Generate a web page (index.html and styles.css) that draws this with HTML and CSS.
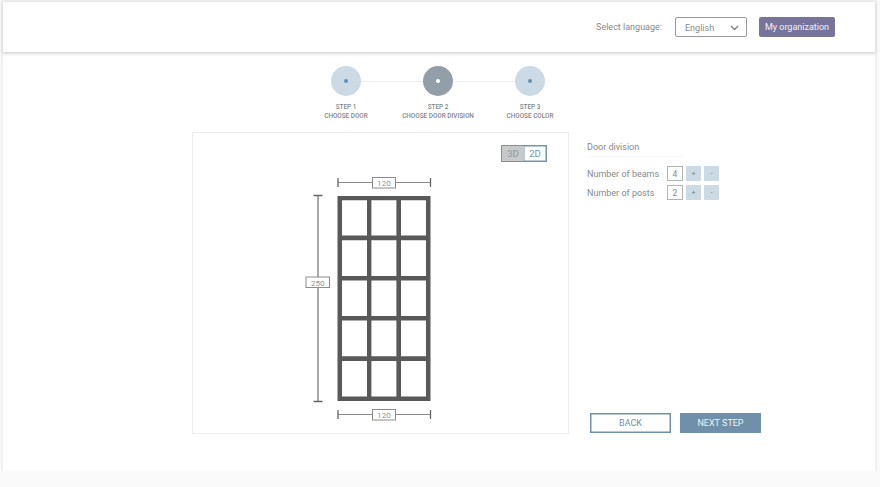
FILE: index.html
```html
<!DOCTYPE html>
<html lang="en">
<head>
<meta charset="utf-8">
<title>Door division</title>
<link rel="stylesheet" href="styles.css">
</head>
<body>
<div class="app">
  <header class="header">
    <span class="lang-label">Select language:</span>
    <button class="select"><span>English</span><svg width="9" height="6" viewBox="0 0 9 6"><path d="M1 1l3.5 3.5L8 1" fill="none" stroke="#7c7f82" stroke-width="1.3"/></svg></button>
    <button class="org">My organization</button>
  </header>
  <ol class="steps">
    <li class="step"><span class="dot"></span><span class="caption">STEP 1<br>CHOOSE DOOR</span></li>
    <li class="step current"><span class="dot"></span><span class="caption">STEP 2<br>CHOOSE DOOR DIVISION</span></li>
    <li class="step"><span class="dot"></span><span class="caption">STEP 3<br>CHOOSE COLOR</span></li>
  </ol>
  <main class="main">
    <section class="canvas">
      <div class="view"><button>3D</button><button class="on">2D</button></div>
      <svg class="drawing" width="130" height="250" viewBox="303 174 130 250">
        <g stroke="#8c8c8c" stroke-width="1" fill="none">
          <path d="M338 182.5H430M338 414.5H430"/>
          <path d="M318 195.5V401.5" stroke-width="1.5"/>
        </g>
        <path d="M338 178V187M430.5 178V187M338 410V419M430.5 410V419M313.5 195.5H322.5M313.5 401.500H322.500" stroke="#666" stroke-width="1.3"/>
        <g fill="#fff" stroke="#8c8c8c">
          <rect x="372.500" y="177.500" width="23" height="10.500"/>
          <rect x="372.500" y="409.500" width="23" height="10.500"/>
          <rect x="306" y="277" width="23.500" height="10.500"/>
        </g>
        <path fill="#59595a" d="M337.500 196H430.500V401H337.500Z"/>
        <path fill="#fff" d="M342 200.300h25v35.300h-25zM371.400 200.300h25v35.300h-25zM401 200.300h25v35.300h-25z
          M342 240.200h25v35.700h-25zM371.400 240.200h25v35.700h-25zM401 240.200h25v35.700h-25z
          M342 280.400h25v35.700h-25zM371.400 280.400h25v35.700h-25zM401 280.400h25v35.700h-25z
          M342 320.500h25v35.700h-25zM371.400 320.500h25v35.700h-25zM401 320.500h25v35.700h-25z
          M342 361h25v35.500h-25zM371.400 361h25v35.500h-25zM401 361h25v35.500h-25z"/>
        <g class="dims">
          <text x="384" y="185.800">120</text>
          <text x="384" y="417.800">120</text>
          <text x="317.800" y="285.500">250</text>
        </g>
      </svg>
    </section>
    <aside class="side">
      <h2>Door division</h2>
      <div class="row"><span class="name">Number of beams</span><span class="value">4</span><button>+</button><button>-</button></div>
      <div class="row"><span class="name">Number of posts</span><span class="value">2</span><button>+</button><button>-</button></div>
      <div class="actions"><button class="back">BACK</button><button class="next">NEXT STEP</button></div>
    </aside>
  </main>
</div>
</body>
</html>
```
FILE: styles.css
```css
* { box-sizing: border-box; }
body { margin: 0; background: #fafafa; font-family: Roboto, "Liberation Sans", sans-serif; color: #85898d; }
button { font: inherit; color: inherit; padding: 0; border: 0; display: flex; align-items: center; justify-content: center; }
.app { width: 876px; height: 471px; margin: 0 0 0 1px; border: 2px solid #f2f2f2; border-bottom: 0; background: #fff; }
.header { height: 50px; display: flex; align-items: center; justify-content: flex-end; padding-right: 40px; background: #fff; box-shadow: 0 1px 3px 1px #d8d8d8; font-size: 9px; }
.lang-label { margin-right: 13px; }
.select { width: 72px; height: 20px; margin-right: 12px; padding: 2px 7px 0 9px; justify-content: space-between; background: #fff; border: 1px solid #9a9a9a; border-radius: 2px; }
.org { width: 76px; height: 20px; background: #77749b; border-radius: 2px; color: #f1f1f7; }
.steps { list-style: none; margin: 14px 0 0 297px; padding: 0; width: 276px; height: 66px; display: flex; }
.step { flex: 0 0 92px; display: flex; flex-direction: column; align-items: center; }
.dot { width: 30px; height: 30px; border-radius: 50%; background: #cbdae4; display: flex; align-items: center; justify-content: center; }
.dot::after { content: ""; width: 4px; height: 4px; border-radius: 50%; background: #6690b2; }
.current .dot { background: #929fa8; }
.current .dot::after { background: #fff; }
.step:not(:last-child) { background: linear-gradient(#e9f1f6, #e9f1f6) 61px 15px / 31px 1px no-repeat; }
.step + .step:not(:last-child) { background: linear-gradient(#e9f1f6, #e9f1f6) 0 15px / 92px 1px no-repeat; }
.step:last-child { background: linear-gradient(#e9f1f6, #e9f1f6) 0 15px / 31px 1px no-repeat; }
.caption { margin-top: 7px; font-size: 6.4px; line-height: 8.5px; font-weight: 500; text-align: center; white-space: nowrap; color: #7f8489; }
.main { display: flex; margin-left: 189px; }
.canvas { width: 377px; height: 302px; border: 1px solid #ededed; padding: 12px 21px 0 110px; display: flex; flex-direction: column; }
.view { align-self: flex-end; display: flex; width: 46px; height: 17px; border: 1px solid #7896ab; font-size: 9.5px; color: #7895aa; }
.view button { flex: 1; background: #c8c9ca; color: #8b9ba7; }
.view .on { background: #fff; color: #7093ac; box-shadow: 0 0 0 .5px #7093ac inset; }
.drawing { margin-top: 12px; display: block; }
.dims { fill: #929292; font-size: 8px; letter-spacing: .1px; text-anchor: middle; }
.side { width: 180px; margin-left: 18px; padding-top: 9px; display: flex; flex-direction: column; font-size: 9px; }
h2 { margin: 0 0 9px; width: 96px; height: 16px; border-bottom: 1px solid #f7f7f7; font: 400 9px/13px Roboto, sans-serif; }
.row { display: flex; height: 15px; align-items: center; margin-bottom: 4px; }
.name { width: 80px; white-space: nowrap; }
.value { width: 16px; height: 15px; border: 1px solid #b2b4b6; display: flex; align-items: center; justify-content: center; font-size: 8.5px; margin-right: 3px; }
.row button { width: 15px; height: 15px; background: #cbdae4; color: #738e9e; font-size: 8px; margin-right: 3px; }
.actions { margin: auto 0 1px 3px; display: flex; gap: 9px; }
.actions button { width: 81px; height: 20px; font-size: 9px; }
.back { border: 1px solid #7090a7; box-shadow: 0 0 0 .5px #7090a7 inset; background: #fff; color: #7090a7; }
.next { background: #7090a9; color: #edf3f7; }
```
